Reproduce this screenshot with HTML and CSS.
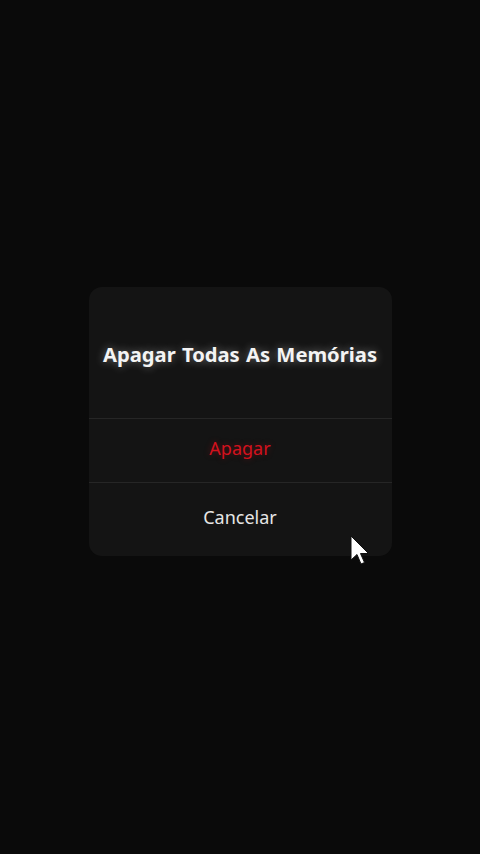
FILE: index.html
```html
<!DOCTYPE html>
<html lang="pt">
<head>
  <meta charset="UTF-8">
  <title>Apagar Memórias</title>
  <meta name="viewport" content="width=device-width, initial-scale=1.0" />
  <link rel="stylesheet" href="styles.css">
</head>
<body>

  <div class="dialog">
    <div class="dialog-title">Apagar Todas As Memórias</div>
    <button class="dialog-btn danger">Apagar</button>
    <button class="dialog-btn">Cancelar</button>
  </div>

  <svg class="cursor" width="22" height="34" viewBox="0 0 22 34">
    <path d="M1 1 L1 25 L7 19.5 L11 29 L14.5 27.5 L10.5 18.5 L18.5 18.5 Z" fill="#ffffff" stroke="#111" stroke-width="1"/>
  </svg>

</body>
</html>
```

FILE: styles.css
```css
:root {
  --bg: #0a0a0a;
  --card: #141414;
  --line: #262626;
  --danger: #d3111d;
  --text: #e6e6e6;
  --font-main: 'Noto Sans', 'Inter', sans-serif;
}

body {
  margin: 0;
  height: 100vh;
  background: var(--bg);
  font-family: var(--font-main);
  display: flex;
  justify-content: center;
  align-items: flex-start;
  position: relative;
}

.dialog {
  margin-top: 287px;
  width: 303px;
  background: var(--card);
  border-radius: 13px;
  display: flex;
  flex-direction: column;
  overflow: hidden;
}

.dialog-title {
  height: 131px;
  box-sizing: border-box;
  padding-top: 53px;
  text-align: center;
  color: #f4f4f4;
  font-size: 20.2px;
  font-weight: 700;
  line-height: 28px;
  word-spacing: 1px;
  text-shadow: 0 0 10px rgba(255, 255, 255, 0.4);
}

.dialog-btn {
  background: none;
  border: none;
  border-top: 1px solid var(--line);
  font-family: var(--font-main);
  font-size: 18px;
  color: var(--text);
  height: 64px;
  padding: 0 0 6px;
}

.dialog-btn:last-child {
  height: 74px;
  padding-bottom: 6px;
}

.danger {
  color: var(--danger);
  text-shadow: 0 0 6px rgba(211, 17, 29, 0.35);
}

.cursor {
  position: absolute;
  left: 350px;
  top: 535px;
}
```
